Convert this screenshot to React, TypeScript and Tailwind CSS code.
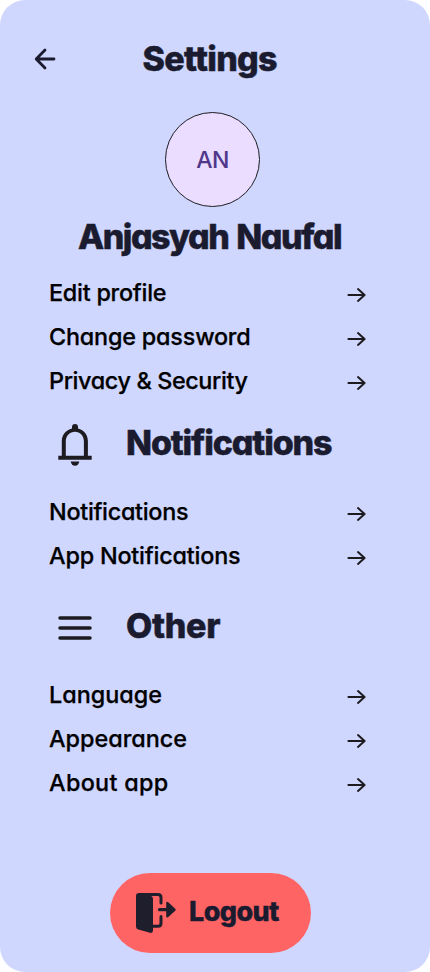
type RowProps = { label: string; tracking: string };

function ArrowRight() {
  return (
    <svg className="mt-1 h-5 w-6" viewBox="0 0 24 20" fill="none" stroke="#1d1b20" strokeWidth="2" strokeLinecap="round" strokeLinejoin="round">
      <path d="M4.4 10H20.2M14 4.1L20.6 10L14 15.9" />
    </svg>
  );
}

function Row({ label, tracking }: RowProps) {
  return (
    <a className="flex h-11 items-center justify-between">
      <span className={`whitespace-nowrap text-[23.4px] leading-none font-medium text-black [-webkit-text-stroke:0.25px_black] ${tracking}`}>{label}</span>
      <ArrowRight />
    </a>
  );
}

function BellIcon() {
  return (
    <svg className="h-[50px] w-[50px]" viewBox="50 420 50 50" fill="#1d1b20">
      <path d="M58.3 459.8V455.8H61.8V441C61.8 435 66 429.8 72 428.4V427A3 3 0 0 1 78 427V428.4C84 429.8 87.9 435 87.9 441V455.8H91.7V459.8ZM65.8 455.8H83.9V441C83.9 435.8 80 431.7 75 431.7C69.9 431.7 65.8 435.8 65.8 441Z" fillRule="evenodd" />
      <path d="M70.8 461.5H79.2A4.2 4.2 0 0 1 70.8 461.5Z" />
    </svg>
  );
}

function MenuIcon() {
  return (
    <svg className="h-[50px] w-[50px]" viewBox="0 0 50 50" fill="none" stroke="#1d1b20" strokeWidth="3.5" strokeLinecap="round">
      <path d="M10 16H40M10 26H40M10 36H40" />
    </svg>
  );
}

function LogoutIcon() {
  return (
    <svg className="h-10 w-10 shrink-0" viewBox="0 0 40 40" fill="#1e1e2c">
      <path d="M3 0H13.5L15.5 3.2Q17 4 17 6V37.3Q17 40.6 14 39.8L2.3 36.5Q0 35.8 0 33.4V3Q0 0 3 0Z" />
      <path d="M5 1.5H22Q25 1.5 25 4.5V10M25 23.5V30.2Q25 33.2 22 33.2H15" fill="none" stroke="#1e1e2c" strokeWidth="3" strokeLinecap="round" />
      <path d="M23.5 16.7H32" stroke="#1e1e2c" strokeWidth="3.2" strokeLinecap="round" />
      <path d="M30.2 10.2V23.2Q30.4 25.5 32.3 24L39.2 17.7Q40.2 16.7 39.2 15.7L32.3 9.3Q30.4 8 30.2 10.2Z" />
    </svg>
  );
}

export default function App() {
  return (
    <main className="flex h-[972px] w-[430px] flex-col overflow-hidden rounded-[25px] bg-[#cfd7ff] [font-family:Inter,'Liberation_Sans',sans-serif] [font-feature-settings:'cv11']">
      <header className="flex h-28 items-center pt-1.5 pl-[33px]">
        <svg className="h-6 w-6" viewBox="0 0 24 24" fill="none" stroke="#1b1b2f" strokeWidth="2.8" strokeLinecap="round" strokeLinejoin="round">
          <path d="M21 12H3.5M12 3L3.2 12L12 21" />
        </svg>
        <h1 className="ml-[85.5px] whitespace-nowrap text-[34px] leading-none font-extrabold tracking-[-0.7px] text-[#1b1b2f] [-webkit-text-stroke:0.5px_#1b1b2f]">Settings</h1>
      </header>
      <section className="flex flex-col">
        <div className="ml-[165px] flex h-[95px] w-[95px] items-center justify-center rounded-full border border-[#1d1b20] bg-[#eaddff] pt-px text-[23px] font-medium tracking-[-0.5px] text-[#4f378a]">AN</div>
        <h2 className="mt-1 ml-[78px] h-[60px] whitespace-nowrap text-[34px] leading-[51px] font-extrabold tracking-[-1.5px] text-[#1b1b2f] [-webkit-text-stroke:0.5px_#1b1b2f] [word-spacing:2px]">Anjasyah Naufal</h2>
      </section>
      <nav className="flex flex-col pr-[62px] pl-[49px]">
        <Row label="Edit profile" tracking="tracking-[-0.25px]" />
        <Row label="Change password" tracking="tracking-[-0.2px]" />
        <Row label="Privacy & Security" tracking="tracking-[-0.38px]" />
      </nav>
      <div className="flex h-[87px] items-start pt-[17px] pl-[50px]">
        <BellIcon />
        <h2 className="ml-[26px] whitespace-nowrap text-[34px] leading-[46px] font-extrabold tracking-[-1.15px] text-[#1b1b2f] [-webkit-text-stroke:0.5px_#1b1b2f]">Notifications</h2>
      </div>
      <nav className="flex flex-col pr-[62px] pl-[49px]">
        <Row label="Notifications" tracking="tracking-[-0.3px]" />
        <Row label="App Notifications" tracking="tracking-[-0.2px]" />
      </nav>
      <div className="flex h-[95px] items-start pt-6 pl-[50px]">
        <MenuIcon />
        <h2 className="ml-[26px] whitespace-nowrap text-[34px] leading-[48px] font-extrabold tracking-[-0.3px] text-[#1b1b2f] [-webkit-text-stroke:0.5px_#1b1b2f]">Other</h2>
      </div>
      <nav className="flex flex-col pr-[62px] pl-[49px]">
        <Row label="Language" tracking="tracking-normal" />
        <Row label="Appearance" tracking="tracking-normal" />
        <Row label="About app" tracking="tracking-[0.3px]" />
      </nav>
      <button className="mt-[68px] ml-[110px] flex h-20 w-[201px] items-center rounded-full bg-[#ff6464] pl-[26px]">
        <LogoutIcon />
        <span className="mb-[3px] ml-[13px] whitespace-nowrap text-[27px] leading-none font-extrabold tracking-[-0.6px] text-[#1b1b2f] [-webkit-text-stroke:0.4px_#1b1b2f]">Logout</span>
      </button>
    </main>
  );
}
